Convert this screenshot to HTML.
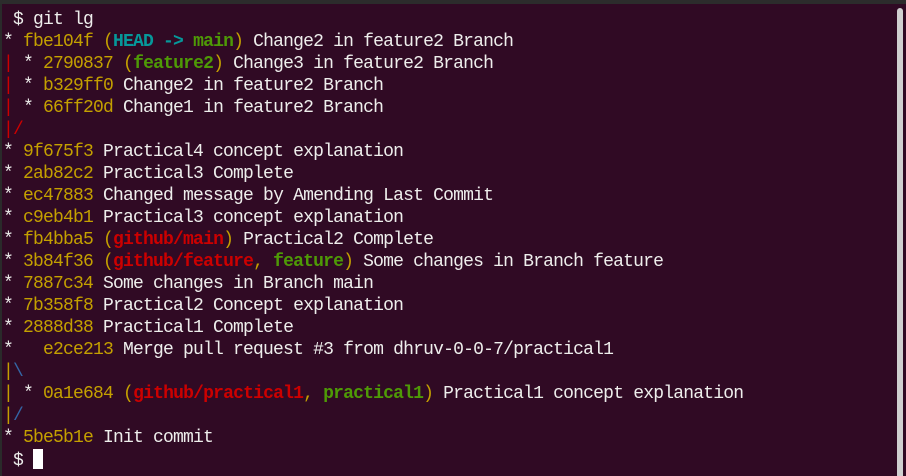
<!DOCTYPE html>
<html><head><style>
html,body{margin:0;padding:0;}
body{width:906px;height:476px;background:#300a24;overflow:hidden;position:relative;}
.top{position:absolute;left:0;top:0;width:906px;height:4px;background:#2c2c2c;}
.left{position:absolute;left:0;top:4px;width:2px;height:472px;background:#2a2a2a;}
.sb{position:absolute;left:897px;top:8px;width:6px;height:468px;background:#d0d0d0;border-radius:3px 3px 0 0;}
pre{position:absolute;left:3px;top:9px;margin:0;font-family:"Liberation Mono",monospace;font-size:18px;letter-spacing:-0.8px;line-height:22px;color:#eeeeec;}
.y{color:#c4a000}.c{color:#06989a;font-weight:bold}.g{color:#4e9a06;font-weight:bold}.r{color:#cc0000;font-weight:bold}.rr{color:#cc0000}.b{color:#3465a4}
.cur{display:inline-block;width:10px;height:20px;background:#fff;vertical-align:-4px;}
</style></head><body>
<div class="top"></div><div class="left"></div><div class="sb"></div>
<pre> $ git lg
* <span class="y">fbe104f (</span><span class="c">HEAD -&gt; </span><span class="g">main</span><span class="y">)</span> Change2 in feature2 Branch
<span class="rr">|</span> * <span class="y">2790837 (</span><span class="g">feature2</span><span class="y">)</span> Change3 in feature2 Branch
<span class="rr">|</span> * <span class="y">b329ff0</span> Change2 in feature2 Branch
<span class="rr">|</span> * <span class="y">66ff20d</span> Change1 in feature2 Branch
<span class="rr">|/</span>
* <span class="y">9f675f3</span> Practical4 concept explanation
* <span class="y">2ab82c2</span> Practical3 Complete
* <span class="y">ec47883</span> Changed message by Amending Last Commit
* <span class="y">c9eb4b1</span> Practical3 concept explanation
* <span class="y">fb4bba5 (</span><span class="r">github/main</span><span class="y">)</span> Practical2 Complete
* <span class="y">3b84f36 (</span><span class="r">github/feature</span><span class="y">, </span><span class="g">feature</span><span class="y">)</span> Some changes in Branch feature
* <span class="y">7887c34</span> Some changes in Branch main
* <span class="y">7b358f8</span> Practical2 Concept explanation
* <span class="y">2888d38</span> Practical1 Complete
*   <span class="y">e2ce213</span> Merge pull request #3 from dhruv-0-0-7/practical1
<span class="y">|</span><span class="b">\</span>
<span class="y">|</span> * <span class="y">0a1e684 (</span><span class="r">github/practical1</span><span class="y">, </span><span class="g">practical1</span><span class="y">)</span> Practical1 concept explanation
<span class="y">|</span><span class="b">/</span>
* <span class="y">5be5b1e</span> Init commit
 $ <span class="cur"></span></pre>
</body></html>
